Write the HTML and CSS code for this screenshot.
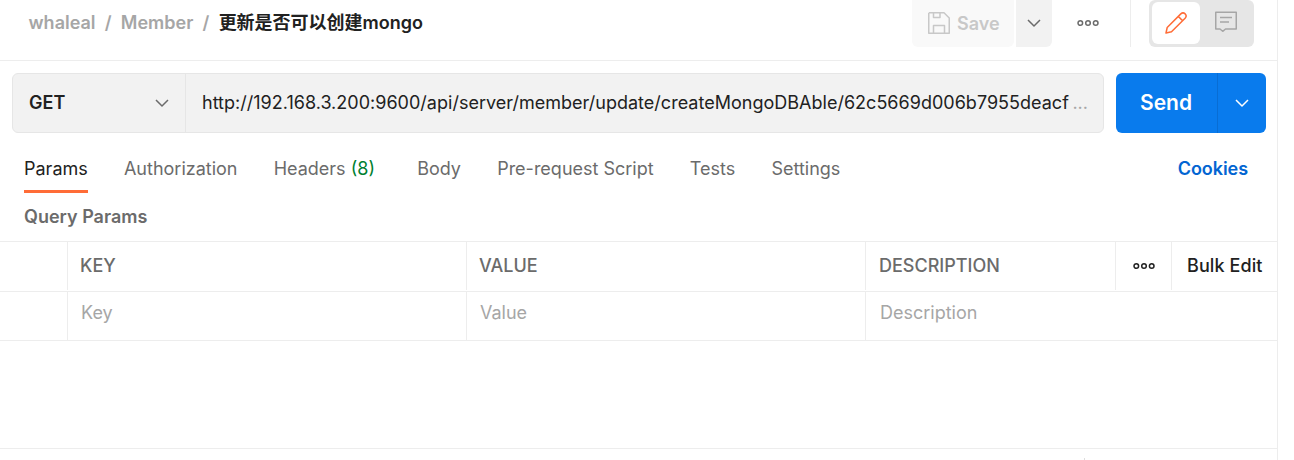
FILE: index.html
```html
<!DOCTYPE html>
<html lang="zh">
<head>
<meta charset="utf-8">
<title>更新是否可以创建mongo</title>
<link rel="stylesheet" href="styles.css">
</head>
<body>
<main class="pane">
  <header class="topbar">
    <nav class="crumbs">
      <span>whaleal</span><span class="sep">/</span><span>Member</span><span class="sep">/</span><strong class="current">更新是否可以创建mongo</strong>
    </nav>
    <div class="actions">
      <button class="save">
        <svg width="22" height="22" viewBox="0 0 22 22"><path d="M1 .75H16L21.25 6V21.25H.75V.75M5.5 1V5.5H12V1M5.5 21V13.5H16.5V21"/></svg>
        <span>Save</span>
      </button>
      <button class="save-more"><svg width="14" height="8" viewBox="0 0 14 8"><path d="M1 1L7 7L13 1"/></svg></button>
      <button class="more"><svg class="dots" width="22" height="8" viewBox="0 0 22 8"><circle cx="3.3" cy="4" r="2.3"/><circle cx="11" cy="4" r="2.3"/><circle cx="18.7" cy="4" r="2.3"/></svg></button>
      <div class="modes">
        <button class="mode active"><svg width="22" height="22" viewBox="0 0 22 22"><path d="M1 21L2.2 15.5L15.8 1.9Q18 -.2 20.2 1.9Q22.2 4 20.1 6.2L6.5 19.8L1 21ZM13.3 4.4L17.6 8.7"/></svg></button>
        <button class="mode comments"><svg width="22" height="22" viewBox="0 0 22 22"><path d="M.75 1.25H21.25V18H10.5L7.7 20.3L5 18H.75ZM5 6.5H17M5 11H14"/></svg></button>
      </div>
    </div>
  </header>
  <section class="request">
    <div class="urlbox">
      <div class="method"><span>GET</span><svg width="14" height="8" viewBox="0 0 14 8"><path d="M1 1L7 7L13 1"/></svg></div>
      <div class="url"><span class="address">http://192.168.3.200:9600/api/server/member/update/createMongoDBAble/62c5669d006b7955deacf</span><span class="ellipsis">...</span></div>
    </div>
    <div class="send">
      <button class="send-main">Send</button>
      <button class="send-more"><svg width="14" height="8" viewBox="0 0 14 8"><path d="M1 1L7 7L13 1"/></svg></button>
    </div>
  </section>
  <nav class="tabs">
    <a class="tab selected">Params</a>
    <a class="tab">Authorization</a>
    <a class="tab headers">Headers <span class="count">(8)</span></a>
    <a class="tab">Body</a>
    <a class="tab">Pre-request Script</a>
    <a class="tab">Tests</a>
    <a class="tab">Settings</a>
    <a class="cookies">Cookies</a>
  </nav>
  <h2 class="caption">Query Params</h2>
  <section class="table">
    <div class="row head">
      <div class="cell"></div><div class="cell">KEY</div><div class="cell">VALUE</div><div class="cell description">DESCRIPTION</div>
      <div class="cell center"><svg class="dots" width="22" height="8" viewBox="0 0 22 8"><circle cx="3.3" cy="4" r="2.3"/><circle cx="11" cy="4" r="2.3"/><circle cx="18.7" cy="4" r="2.3"/></svg></div>
      <div class="cell bulk">Bulk Edit</div>
    </div>
    <div class="row entry">
      <div class="cell"></div><div class="cell">Key</div><div class="cell">Value</div><div class="cell description">Description</div>
    </div>
  </section>
  <footer class="response"><span class="handle"></span></footer>
</main>
</body>
</html>
```
FILE: styles.css
```css
* { box-sizing: border-box; }
body {
  margin: 0;
  height: 460px;
  overflow: hidden;
  background: #fff;
  color: #212121;
  font: 18px/24px Inter, "Noto Sans CJK SC", sans-serif;
}
button { margin: 0; padding: 0; border: 0; background: none; font: inherit; color: inherit; }
svg { display: block; flex: none; fill: none; stroke: #6b6b6b; stroke-width: 1.5; stroke-linejoin: round; }
.pane { display: flex; flex-direction: column; width: 1278px; height: 460px; border-right: 1px solid #ededed; }

.topbar { display: flex; justify-content: space-between; height: 61px; border-bottom: 1px solid #ededed; }
.crumbs { display: flex; height: 46px; align-items: center; padding-left: 28.5px; color: #a6a6a6; font-weight: 600; white-space: nowrap; }
.sep { width: 25.3px; text-align: center; }
.current { color: #212121; font-weight: 600; }
.actions { display: flex; height: 47px; padding-right: 23px; }
.save { display: flex; align-items: center; gap: 7px; width: 102px; padding-left: 16px; border-radius: 0 0 6px 6px; background: #f9f9f9; color: #c8c8c8; font-weight: 600; }
.save svg { position: relative; top: -1px; stroke: #c8c8c8; }
.save-more { display: flex; align-items: center; justify-content: center; width: 36px; margin-left: 2px; border-radius: 0 0 6px 0; background: #f2f2f2; padding-bottom: 1px; }
.more { display: flex; align-items: center; justify-content: center; width: 79px; padding: 0 7px 2px 0; border-right: 1px solid #ededed; }
.modes { display: flex; width: 105px; margin-left: 18px; padding: 2px 3px 3px; border-radius: 6px; background: #e6e6e6; }
.mode { display: flex; align-items: center; justify-content: center; width: 48px; border-radius: 6px; }
.mode svg { stroke: #a6a6a6; }
.comments { padding: 0 0 2px 4px; }
.mode.active { background: #fff; }
.mode.active svg { stroke: #ff6c37; }

.request { display: flex; gap: 12px; height: 72px; padding: 12px 11px 0 12px; }
.urlbox { display: flex; width: 1092px; height: 60px; border: 1px solid #e6e6e6; border-radius: 6px; background: #f2f2f2; }
.method { display: flex; align-items: center; justify-content: space-between; width: 173px; padding: 0 16px; border-right: 1px solid #e6e6e6; font-weight: 600; }
.url { display: flex; flex: 1; align-items: center; justify-content: space-between; padding: 0 15px 0 16px; white-space: nowrap; }
.address { letter-spacing: 0.015px; }
.ellipsis { color: #a6a6a6; }
.send { display: flex; width: 150px; height: 60px; border-radius: 6px; background: #097bed; color: #fff; }
.send-main { width: 102px; padding-right: 1px; border-right: 1px solid #086dd4; font-size: 21px; font-weight: 600; }
.send-more { display: flex; flex: 1; align-items: center; justify-content: center; }
.send svg { stroke: #fff; }

.tabs { display: flex; gap: 36.2px; height: 60px; padding: 12px 29px 0 24px; color: #6b6b6b; white-space: nowrap; }
.tab { height: 48px; padding-top: 12px; }
.selected { border-bottom: 3px solid #ff6c37; color: #212121; }
.headers { margin-right: 6px; }
.count { color: #007f31; }
.cookies { margin-left: auto; padding-top: 12px; color: #0265d2; font-weight: 600; letter-spacing: -0.05px; }
.caption { height: 48px; margin: 0; padding: 12px 24px; color: #6b6b6b; font-size: 18px; font-weight: 600; line-height: 24px; }

.table { border-top: 1px solid #ededed; }
.row { display: grid; grid-template-columns: 68px 399px 399px 250px 56px 105px; border-bottom: 1px solid #ededed; }
.cell { display: flex; align-items: center; padding-left: 12px; border-right: 1px solid #ededed; }
.cell:last-child { border-right: 0; }
.head { height: 50px; color: #6b6b6b; font-weight: 500; }
.head .cell { margin-bottom: 1px; }
.head .description { padding-left: 13px; }
.head .bulk { padding-left: 15px; color: #212121; white-space: nowrap; letter-spacing: 0.1px; }
.head .center { justify-content: center; padding: 0; }
.center svg { stroke: #212121; }
.entry { height: 49px; color: #a6a6a6; }
.entry .cell { padding: 0 0 6px 13px; }
.entry .description { padding-left: 14px; }
.response { display: flex; flex: 1; align-items: flex-end; margin-top: 107px; border-top: 1px solid #ededed; }
.handle { width: 1px; height: 2px; margin-left: 1084px; background: #dedede; }
```
